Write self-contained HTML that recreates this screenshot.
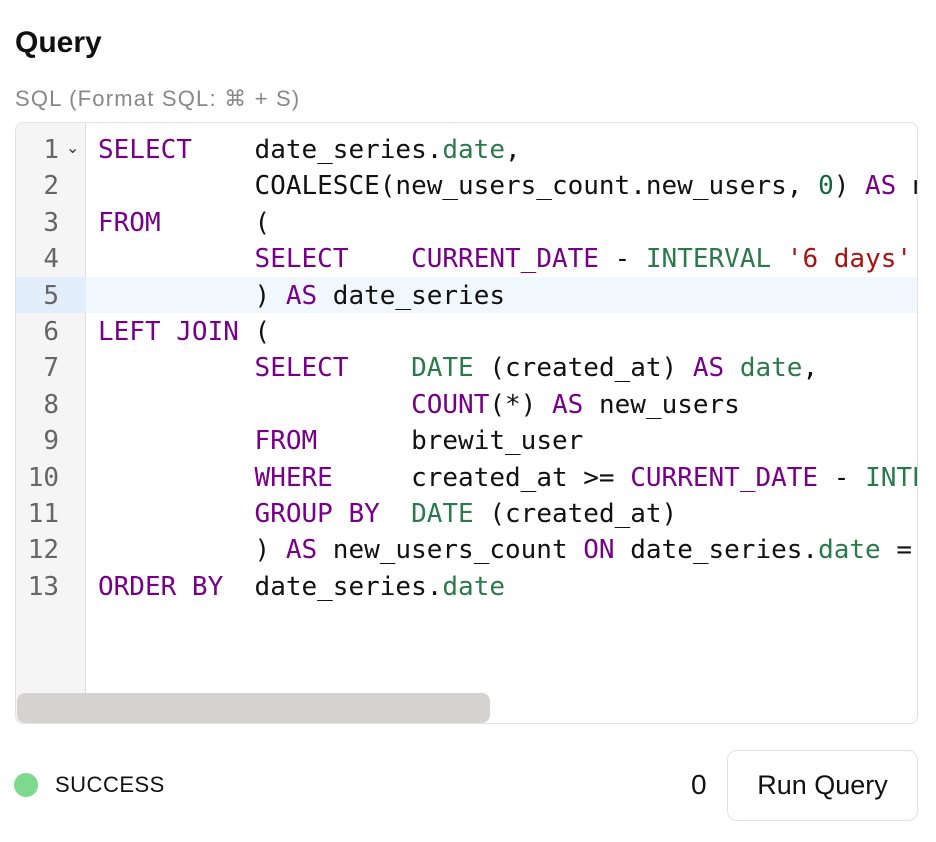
<!DOCTYPE html>
<html><head><meta charset="utf-8"><style>
*{box-sizing:border-box;margin:0;padding:0}
body{width:936px;height:842px;background:#fff;font-family:"Liberation Sans",sans-serif;position:relative;overflow:hidden;color:#111}
.title{position:absolute;left:15px;top:26px;font-size:30px;font-weight:600;}
.sub{position:absolute;left:15px;top:86px;font-size:22px;color:#888;letter-spacing:1.2px}
.ed{position:absolute;left:15px;top:122px;width:903px;height:602px;border:1px solid #e2e2e2;border-radius:8px;overflow:hidden;background:#fff}
.gut{position:absolute;left:0;top:0;width:70px;height:100%;background:#f5f5f5;border-right:1px solid #ddd}
.hl{position:absolute;left:0;top:154px;width:100%;height:36.4px;background:#f0f7fd}
.hlg{position:absolute;left:0;top:154px;width:70px;height:36.4px;background:#e2eefb}
.code{position:absolute;left:0;top:9px;font-family:"DejaVu Sans Mono","Liberation Mono",monospace;font-size:26px;line-height:36.4px;white-space:pre}
.ln{position:absolute;left:0;width:43px;text-align:right;color:#666}
.tx{position:absolute;left:82px;color:#111}
.k{color:#770088}.f{color:#2c7a4b}.n{color:#116644}.s{color:#a11}
.fold{position:absolute;left:50px;top:15px;font-size:16px;color:#333}
.sb{position:absolute;left:1px;top:570px;width:473px;height:30px;background:#d4d3cf;border-radius:8px}
.dot{position:absolute;left:14px;top:773px;width:24px;height:24px;border-radius:50%;background:#7dd98d}
.st{position:absolute;left:55px;top:772px;font-size:22px;color:#111;letter-spacing:0.5px}
.zero{position:absolute;left:691px;top:769px;font-size:28px}
.btn{position:absolute;left:727px;top:750px;width:191px;height:71px;border:1.5px solid #e2e2e2;border-radius:10px;font-size:27px;display:flex;align-items:center;justify-content:center}
</style></head><body>
<div class="title">Query</div>
<div class="sub">SQL (Format SQL: ⌘ + S)</div>
<div class="ed">
<div class="gut"></div><div class="hl"></div><div class="hlg"></div>
<div class="fold">⌄</div>
<div class="code"><div class="ln">1
2
3
4
5
6
7
8
9
10
11
12
13</div><div class="tx"><span class="k">SELECT</span>    date_series.<span class="f">date</span>,
          COALESCE(new_users_count.new_users, <span class="n">0</span>) <span class="k">AS</span> new_users
<span class="k">FROM</span>      (
          <span class="k">SELECT</span>    <span class="k">CURRENT_DATE</span> - <span class="f">INTERVAL</span> <span class="s">'6 days'</span>
          ) <span class="k">AS</span> date_series
<span class="k">LEFT JOIN</span> (
          <span class="k">SELECT</span>    <span class="f">DATE</span> (created_at) <span class="k">AS</span> <span class="f">date</span>,
                    <span class="k">COUNT</span>(*) <span class="k">AS</span> new_users
          <span class="k">FROM</span>      brewit_user
          <span class="k">WHERE</span>     created_at &gt;= <span class="k">CURRENT_DATE</span> - <span class="f">INTERVAL</span>
          <span class="k">GROUP BY</span>  <span class="f">DATE</span> (created_at)
          ) <span class="k">AS</span> new_users_count <span class="k">ON</span> date_series.<span class="f">date</span> = new
<span class="k">ORDER BY</span>  date_series.<span class="f">date</span></div></div>
<div class="sb"></div>
</div>
<div class="dot"></div><div class="st">SUCCESS</div>
<div class="zero">0</div>
<div class="btn">Run Query</div>
</body></html>
